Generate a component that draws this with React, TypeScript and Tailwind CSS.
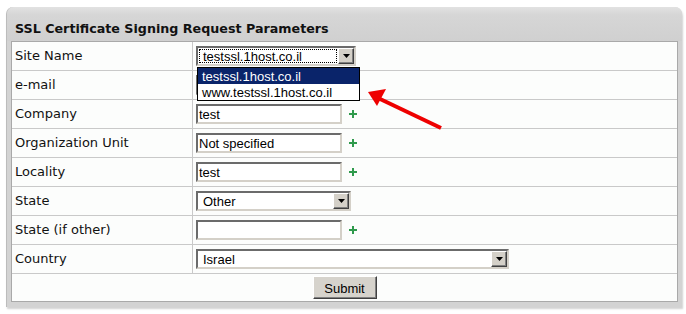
import React from "react";

const ARIAL = { fontFamily: "'Liberation Sans', Arial, sans-serif" };

const Plus = () => (
  <svg width="8" height="8" viewBox="0 0 8 8" className="shrink-0">
    <rect x="3" y="0" width="2" height="8" fill="#2f9a4c" />
    <rect x="0" y="3" width="8" height="2" fill="#2f9a4c" />
  </svg>
);

const Arrow = () => (
  <div className="w-[16px] h-full flex items-center justify-center bg-[#d4d0c8] border border-t-white border-l-white border-b-[#404040] border-r-[#404040] shadow-[inset_-1px_-1px_0_#808080]">
    <svg width="7" height="4" viewBox="0 0 7 4">
      <polygon points="0,0 7,0 3.5,4" fill="#000" />
    </svg>
  </div>
);

const inset =
  "border-2 border-t-[#6b6b6b] border-l-[#6b6b6b] border-b-[#d4d0c8] border-r-[#d4d0c8] bg-white";

const Input = ({ value = "" }: { value?: string }) => (
  <div
    className={`${inset} w-[146px] h-[20px] flex items-center pl-[1px] text-[13px] text-black leading-none`}
    style={ARIAL}
  >
    {value}
  </div>
);

const Select = ({ value, w, focused = false }: { value: string; w: string; focused?: boolean }) => (
  <div className={`${inset} ${w} h-[20px] flex items-stretch text-[13px] text-black leading-none`} style={ARIAL}>
    <div className="flex-1 flex items-center p-[1px]">
      <div
        className={`flex-1 h-full flex items-center pl-[3px] ${
          focused ? "border border-dotted border-black" : "border border-transparent"
        }`}
      >
        {value}
      </div>
    </div>
    <Arrow />
  </div>
);

const Row = ({ label, children }: { label: string; children?: React.ReactNode }) => (
  <div className="grid grid-cols-[181px_1fr] h-[29px] border-b border-[#c9c9c9]">
    <div className="flex items-center pl-[3px] border-r border-[#c9c9c9] text-[13px] text-[#111]">{label}</div>
    <div className="flex items-center pl-[3px] gap-[7px]">{children}</div>
  </div>
);

export default function App() {
  return (
    <div
      className="relative w-[686px] h-[314px] bg-white overflow-hidden"
      style={{ fontFamily: "'DejaVu Sans', sans-serif" }}
    >
      <div className="ml-[6px] mt-[7px] w-[676px] rounded-t-[7px] bg-[#d3d3d3] pb-[5px] shadow-[1px_2px_2px_rgba(0,0,0,0.18)] border-l border-[#bcbcbc]">
        <div className="h-[34px] flex items-center pl-[8px] pt-[10px] text-[12.7px] font-bold text-[#111] bg-[linear-gradient(#e2e2e2_0px,#d6d6d6_8px,#d0d0d0_100%)] rounded-t-[7px]">
          SSL Certificate Signing Request Parameters
        </div>
        <div className="mx-[4px] mr-[4px] border border-[#a9a9a9] bg-[#fcfdfc]">
          <Row label="Site Name">
            <Select value="testssl.1host.co.il" w="w-[160px]" focused />
          </Row>
          <Row label="e-mail">
            <Input />
            <Plus />
          </Row>
          <Row label="Company">
            <Input value="test" />
            <Plus />
          </Row>
          <Row label="Organization Unit">
            <Input value="Not specified" />
            <Plus />
          </Row>
          <Row label="Locality">
            <Input value="test" />
            <Plus />
          </Row>
          <Row label="State">
            <Select value="Other" w="w-[155px]" />
          </Row>
          <Row label="State (if other)">
            <Input />
            <Plus />
          </Row>
          <Row label="Country">
            <Select value="Israel" w="w-[313px]" />
          </Row>
          <div className="h-[27px] flex items-center justify-center" style={ARIAL}>
            <button className="w-[64px] h-[23px] bg-[#d6d3cc] border border-t-white border-l-white border-b-[#404040] border-r-[#404040] shadow-[inset_-1px_-1px_0_#808080] text-[13px] text-black leading-none pt-[1px]">
              Submit
            </button>
          </div>
        </div>
      </div>

      {/* open dropdown list */}
      <div
        className="absolute left-[197px] top-[67px] w-[163px] h-[34px] border border-black bg-white text-[13px] leading-none"
        style={ARIAL}
      >
        <div className="h-[16px] bg-[#0a246a] text-white flex items-center pl-[4px]">testssl.1host.co.il</div>
        <div className="h-[16px] text-black flex items-center pl-[4px]">www.testssl.1host.co.il</div>
      </div>

      {/* red arrow */}
      <svg className="absolute left-0 top-0 pointer-events-none" width="686" height="314">
        <line x1="441" y1="128" x2="378" y2="98" stroke="#ee0000" strokeWidth="4" />
        <polygon points="368,92 386,89 377,106" fill="#ee0000" />
      </svg>
    </div>
  );
}
